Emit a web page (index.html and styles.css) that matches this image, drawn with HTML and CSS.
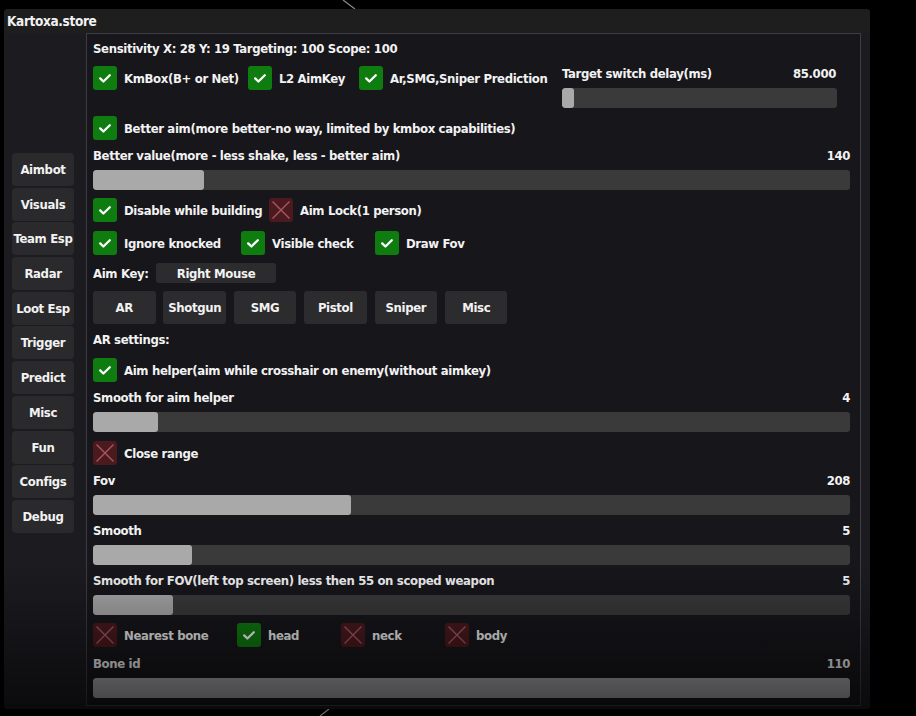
FILE: index.html
```html
<!DOCTYPE html>
<html lang="en">

<head>
  <meta charset="UTF-8">
  <meta name="viewport" content="width=device-width, initial-scale=1.0">
  <title>Kartoxa.store</title>
  <link rel="stylesheet" href="styles.css">
</head>

<body>
  <svg class="backdrop" width="916" height="716" viewBox="0 0 916 716">
    <line x1="343" y1="0" x2="355" y2="9" stroke="#8a8a8a" stroke-width="1.2" />
    <line x1="320" y1="716" x2="329" y2="709" stroke="#6a6a6a" stroke-width="1.2" />
  </svg>

  <div class="window">
    <div class="titlebar">Kartoxa.store</div>

    <div class="main">
      <nav class="tabs">
        <button class="tab">Aimbot</button>
        <button class="tab">Visuals</button>
        <button class="tab">Team Esp</button>
        <button class="tab">Radar</button>
        <button class="tab">Loot Esp</button>
        <button class="tab">Trigger</button>
        <button class="tab">Predict</button>
        <button class="tab">Misc</button>
        <button class="tab">Fun</button>
        <button class="tab">Configs</button>
        <button class="tab">Debug</button>
      </nav>

      <section class="panel">
        <div class="stack">
          <div class="text">Sensitivity X: 28 Y: 19 Targeting: 100 Scope: 100</div>

          <div class="row row-top">
            <label class="check on"><span class="box"></span>KmBox(B+ or Net)</label>
            <label class="check on"><span class="box"></span>L2 AimKey</label>
            <label class="check on"><span class="box"></span>Ar,SMG,Sniper Prediction</label>
            <div class="field">
              <div class="field-head"><span>Target switch delay(ms)</span><span class="value">85.000</span></div>
              <div class="slider"><div class="grab"></div></div>
            </div>
          </div>

          <label class="check on"><span class="box"></span>Better aim(more better-no way, limited by kmbox capabilities)</label>

          <div class="field">
            <div class="field-head"><span>Better value(more - less shake, less - better aim)</span><span>140</span></div>
            <div class="slider"><div class="fill" style="width: 14.7%"></div></div>
          </div>

          <div class="row row-build">
            <label class="check on"><span class="box"></span>Disable while building</label>
            <label class="check off"><span class="box"></span>Aim Lock(1 person)</label>
          </div>

          <div class="row row-knock">
            <label class="check on"><span class="box"></span>Ignore knocked</label>
            <label class="check on"><span class="box"></span>Visible check</label>
            <label class="check on"><span class="box"></span>Draw Fov</label>
          </div>

          <div class="aimkey">
            <span class="aimkey-label">Aim Key:</span>
            <button class="combo">Right Mouse</button>
          </div>

          <div class="weapons">
            <button class="weapon">AR</button>
            <button class="weapon">Shotgun</button>
            <button class="weapon">SMG</button>
            <button class="weapon">Pistol</button>
            <button class="weapon">Sniper</button>
            <button class="weapon">Misc</button>
          </div>

          <div class="text">AR settings:</div>

          <label class="check on nudge"><span class="box"></span>Aim helper(aim while crosshair on enemy(without aimkey)</label>

          <div class="field">
            <div class="field-head"><span>Smooth for aim helper</span><span>4</span></div>
            <div class="slider"><div class="fill" style="width: 8.6%"></div></div>
          </div>

          <label class="check off bump"><span class="box"></span>Close range</label>

          <div class="field">
            <div class="field-head"><span>Fov</span><span>208</span></div>
            <div class="slider"><div class="fill" style="width: 34.1%"></div></div>
          </div>

          <div class="field">
            <div class="field-head"><span>Smooth</span><span>5</span></div>
            <div class="slider"><div class="fill" style="width: 13.1%"></div></div>
          </div>

          <div class="field">
            <div class="field-head"><span>Smooth for FOV(left top screen) less then 55 on scoped weapon</span><span>5</span></div>
            <div class="slider"><div class="fill" style="width: 10.6%"></div></div>
          </div>

          <div class="row row-bones">
            <label class="check off"><span class="box"></span>Nearest bone</label>
            <label class="check on"><span class="box"></span>head</label>
            <label class="check off"><span class="box"></span>neck</label>
            <label class="check off"><span class="box"></span>body</label>
          </div>

          <div class="field bump">
            <div class="field-head"><span>Bone id</span><span>110</span></div>
            <div class="slider"><div class="fill" style="width: 100%"></div></div>
          </div>
        </div>
      </section>
    </div>

    <div class="fade"></div>
  </div>
</body>

</html>
```

FILE: styles.css
```css
body {
  background-color: #000;
  margin: 0;
  width: 916px;
  height: 716px;
  overflow: hidden;
  position: relative;
  font-family: "DejaVu Sans Condensed", "Liberation Sans", sans-serif;
  font-weight: bold;
  font-size: 13px;
  letter-spacing: -0.35px;
  color: #f2f2f2;
}

button {
  font: inherit;
  letter-spacing: inherit;
  color: inherit;
  border: none;
  padding: 0;
  white-space: nowrap;
}

.backdrop {
  position: absolute;
  top: 0;
  left: 0;
  pointer-events: none;
}

.window {
  position: relative;
  margin: 9px 0 0 4px;
  width: 866px;
  height: 700px;
  background: #1c1b20;
  border-radius: 4px;
  overflow: hidden;
}

.titlebar {
  height: 24px;
  line-height: 24px;
  padding-left: 3px;
  background: #1e1e1f;
  font-size: 13.5px;
}

.main {
  display: flex;
  height: 676px;
}

/* left tabs */
.tabs {
  width: 82px;
  box-sizing: border-box;
  padding: 120px 0 0 8px;
  display: flex;
  flex-direction: column;
  gap: 1.7px;
}

.tab {
  width: 62px;
  height: 33px;
  background: #2a2a2c;
  border-radius: 4px;
  text-align: center;
}

/* content panel */
.panel {
  width: 775px;
  height: 673px;
  box-sizing: border-box;
  border: 1px solid #3e3d47;
  background: #17161b;
  padding: 7px 10px 0 6px;
}

.stack {
  display: flex;
  flex-direction: column;
  gap: 8px;
}

.text {
  height: 16px;
  line-height: 16px;
}

.row {
  display: grid;
  align-items: start;
}

.row-top {
  grid-template-columns: 155px 111px 203px 275px;
  margin-top: 1px;
}

.row-build {
  grid-template-columns: 176px auto;
}

.row-knock {
  grid-template-columns: 148px 134px auto;
  margin-top: 1px;
}

.row-bones {
  grid-template-columns: 144px 104px 104px auto;
}

.nudge {
  margin-top: 2px;
}

.bump {
  margin-top: 1px;
}

/* checkboxes */
.check {
  display: flex;
  align-items: center;
  gap: 7px;
  height: 24px;
  white-space: nowrap;
}

.box {
  flex: none;
  width: 24px;
  height: 24px;
  border-radius: 3px;
  background-repeat: no-repeat;
  background-position: center;
}

.check.on .box {
  background-color: #0f7c10;
  background-image: url("data:image/svg+xml,%3Csvg xmlns='http://www.w3.org/2000/svg' width='24' height='24' viewBox='0 0 24 24'%3E%3Cpath d='M7.2 12.4l3.2 3.1 6.4-6.3' fill='none' stroke='%23fff' stroke-width='2.3' stroke-linecap='round' stroke-linejoin='round'/%3E%3C/svg%3E");
}

.check.off .box {
  background-color: #4a1a1f;
  background-image: url("data:image/svg+xml,%3Csvg xmlns='http://www.w3.org/2000/svg' width='24' height='24' viewBox='0 0 24 24'%3E%3Cpath d='M3.5 3.5l17 17M20.5 3.5l-17 17' stroke='%23a9575e' stroke-width='1.4'/%3E%3C/svg%3E");
}

/* sliders */
.field {
  display: flex;
  flex-direction: column;
  gap: 6px;
}

.field-head {
  display: flex;
  justify-content: space-between;
  height: 16px;
  line-height: 16px;
}

.row-top .field-head .value {
  padding-right: 1px;
}

.slider {
  height: 20px;
  background: #3a3a3b;
  border-radius: 3px;
  overflow: hidden;
}

.fill {
  height: 100%;
  background: #a9a9a9;
  border-radius: 3px;
}

.grab {
  width: 12px;
  height: 100%;
  background: #a9a9a9;
  border-radius: 3px;
}

/* aim key + weapon buttons */
.aimkey {
  display: flex;
  align-items: center;
  height: 20px;
}

.aimkey-label {
  width: 63px;
}

.combo {
  width: 120px;
  height: 20px;
  background: #2c2c2e;
  border-radius: 3px;
}

.weapons {
  display: flex;
  gap: 7.9px;
}

.weapon {
  width: 62.5px;
  height: 33px;
  background: #2c2c2e;
  border-radius: 3px;
}

.fade {
  position: absolute;
  left: 0;
  right: 0;
  bottom: 0;
  height: 145px;
  background: linear-gradient(to bottom, rgba(0, 0, 0, 0), rgba(0, 0, 0, 0.62));
  pointer-events: none;
}
```
